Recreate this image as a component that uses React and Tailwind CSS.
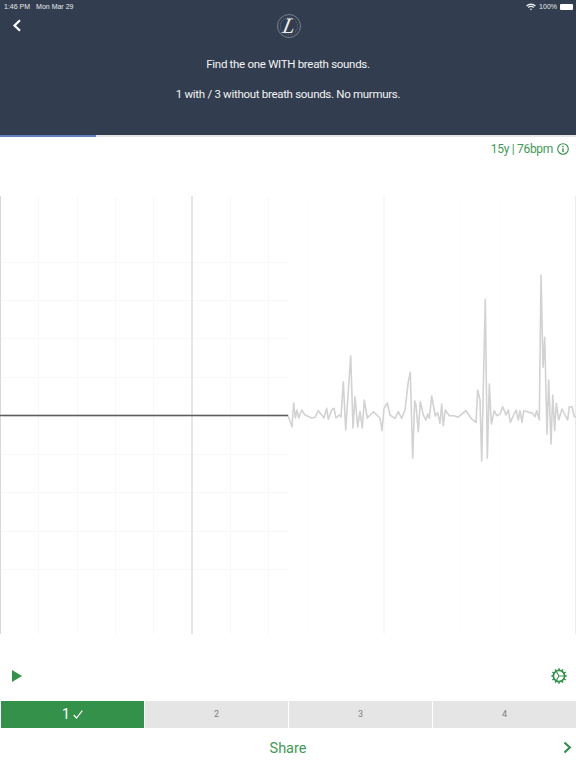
import React from "react";

const wave = "0,415.5 288,415.5 292,426.7 293.7,403 295.3,418 297,410 298.7,418 301.7,410 305,415 311.7,418 315,417.3 318.3,410.7 321.7,415 324,418 326.7,408.3 328.3,419.3 331.7,410 334,408.3 336,418 339.3,415 341,417 343.3,381.7 345.7,430 350.7,355.7 353,428 355,396.7 357.7,427 360,411.7 362.3,428 364.3,400 367.3,418 373.3,411.7 380,418 382,430.7 384,408.3 387.3,403 390,415 395,418.3 398.3,411.7 401.7,418.3 405,410 408.3,381.7 410.3,372.3 412.7,458.3 414.7,400.7 416,405 418.3,431.7 420.3,401.7 423.3,415 426,420 427.7,414 429.3,418.3 431.7,396 435.3,416 437.7,412.7 440,423.3 441.7,404 443.3,425.7 445.3,410 449.3,415.7 454.3,415.7 457.7,417.3 466,410.7 471,418.3 476,422.3 477.7,390 480,400 481.7,461 485.3,299.3 487.3,458.3 489.3,384 491.3,424 494.3,410.7 496.7,415.7 500,414 502.7,406.7 506,415 508.3,410 510.3,422.3 516,410 518.3,420 520,410.7 522,422.3 523.7,410.7 532.7,413.3 535,416.7 536.7,410.7 539.3,420 541,275 543,367.3 544.7,337.3 547,434 548.7,380 551,444 552.7,395 554.7,430.7 556.3,403.3 558.7,420 562,409 567.7,420 569.3,406.7 572,406.7 574.3,416.7 576,416.7";

const vLight = [38.5, 77.5, 115.5, 153.5, 230.5, 268.5];
const vFaint = [307.5, 345.5, 422.5, 460.5, 499.5, 537.5];
const hLight = [262, 300, 338, 377, 454, 492, 531, 569];

function Chart() {
  return (
    <svg className="block w-[576px] h-[438px]" viewBox="0 196 576 438" fill="none">
      {vLight.map((x) => (
        <line key={x} x1={x} x2={x} y1="196" y2="634" stroke="#f8f8f8" strokeWidth="1" />
      ))}
      {vFaint.map((x) => (
        <line key={x} x1={x} x2={x} y1="196" y2="634" stroke="#fdfdfd" strokeWidth="1" />
      ))}
      {hLight.map((y) => (
        <line key={y} x1="0" x2="288" y1={y + 0.5} y2={y + 0.5} stroke="#f8f8f8" strokeWidth="1" />
      ))}
      <line x1="0.5" x2="0.5" y1="196" y2="634" stroke="#d8d8d8" strokeWidth="1" />
      <line x1="192" x2="192" y1="196" y2="634" stroke="#dcdcdc" strokeWidth="1.5" />
      <line x1="384" x2="384" y1="196" y2="634" stroke="#f2f2f2" strokeWidth="1" />
      <line x1="575.5" x2="575.5" y1="196" y2="634" stroke="#ececec" strokeWidth="1" />
      <polyline points={wave} stroke="#d2d2d2" strokeWidth="1.6" strokeLinejoin="round" />
      <line x1="0" x2="288" y1="415.5" y2="415.5" stroke="#5c5c5c" strokeWidth="1.5" />
    </svg>
  );
}

function Gear() {
  const teeth = Array.from({ length: 12 }, (_, i) => i * 30);
  return (
    <svg width="16" height="16" viewBox="0 0 16 16" fill="none" stroke="#34914a">
      <circle cx="8" cy="8" r="5.6" strokeWidth="1.7" />
      {teeth.map((a) => (
        <line key={a} x1="8" y1="0.3" x2="8" y2="2.4" strokeWidth="1.5" transform={`rotate(${a} 8 8)`} />
      ))}
      <path d="M8 8 L13 8 M8 8 L5.5 3.7 M8 8 L5.5 12.3" strokeWidth="1.1" />
    </svg>
  );
}

export default function App() {
  return (
    <div className="w-[576px] h-[768px] overflow-hidden bg-white flex flex-col font-['Roboto',sans-serif]">
      <header className="h-[135px] bg-[#323e4f] flex flex-col shrink-0">
        <div className="h-[11px] flex items-center justify-between pl-1 pr-[3px] mt-[1px] font-['Liberation_Sans',sans-serif] text-[7px] leading-none text-[#e8eaec]">
          <div className="flex gap-[6px]">
            <span>1:46 PM</span>
            <span>Mon Mar 29</span>
          </div>
          <div className="flex items-center gap-[3px]">
            <svg width="10" height="8" viewBox="0 0 18 14" fill="none" stroke="#e8eaec" strokeWidth="2.4">
              <path d="M1 5 C5.5 1 12.5 1 17 5" />
              <path d="M4 8 C6.8 5.6 11.2 5.6 14 8" />
              <path d="M9 13 L6.8 10.6 C8 9.7 10 9.7 11.2 10.6 Z" fill="#e8eaec" stroke="none" />
            </svg>
            <span>100%</span>
            <span className="w-[13px] h-[6px] rounded-[1px] bg-white" />
          </div>
        </div>
        <div className="relative h-[24px] mt-[2px] flex items-center justify-center">
          <svg className="absolute left-[12px] top-[5px]" width="10" height="13" viewBox="0 0 10 13" fill="none" stroke="white" strokeWidth="2.2">
            <path d="M8 1.2 L2.5 6.5 L8 11.8" />
          </svg>
          <div className="relative ml-[2px] w-[24px] h-[24px] rounded-full border border-[#77818e] flex items-center justify-center">
            <div className="absolute inset-[2px] rounded-full border border-dotted border-[#6b7582]" />
            <span className="relative font-['Liberation_Serif',serif] italic text-[22px] leading-none text-[#eceef0] -skew-x-12">L</span>
          </div>
        </div>
        <p className="mt-[18px] text-center text-[11.5px] tracking-[-0.3px] leading-[16px] text-[#f2f3f4]">Find the one WITH breath sounds.</p>
        <p className="mt-[14px] text-center text-[11.5px] tracking-[-0.3px] leading-[16px] text-[#f2f3f4]">1 with / 3 without breath sounds. No murmurs.</p>
      </header>

      <div className="h-[2px] bg-[#e4e4e4] shrink-0">
        <div className="w-[96px] h-full bg-[#5f80bd]" />
      </div>

      <div className="h-[24px] pr-[7px] flex items-center justify-end gap-[4px] text-[#3f9a55] shrink-0">
        <span className="text-[12px] tracking-[-0.3px] leading-none">15y | 76bpm</span>
        <svg width="12" height="12" viewBox="0 0 12 12" fill="none" stroke="#34914a">
          <circle cx="6" cy="6" r="5.3" strokeWidth="1.1" />
          <path d="M6 5.2 V9" strokeWidth="1.4" />
          <path d="M6 3 V4.2" strokeWidth="1.4" />
        </svg>
      </div>

      <div className="mt-[35px] shrink-0">
        <Chart />
      </div>

      <div className="h-[66px] pl-[12px] pr-[9px] flex items-center justify-between shrink-0 pt-[18px]">
        <svg width="10" height="12" viewBox="0 0 10 12">
          <path d="M0 0 L10 6 L0 12 Z" fill="#34914a" />
        </svg>
        <Gear />
      </div>

      <div className="h-[29px] pl-[1px] grid grid-cols-4 gap-[1px] shrink-0 py-[1px]">
        <div className="bg-[#34914a] flex items-center justify-center gap-[3px] text-white text-[14px]">
          <span>1</span>
          <svg width="10" height="9" viewBox="0 0 10 9" fill="none" stroke="white" strokeWidth="1.2">
            <path d="M0.7 5 L3.5 8 L9.3 0.7" />
          </svg>
        </div>
        <div className="bg-[#e5e5e5] flex items-center justify-center text-[#808080] text-[9px]">2</div>
        <div className="bg-[#e5e5e5] flex items-center justify-center text-[#808080] text-[9px]">3</div>
        <div className="bg-[#e5e5e5] flex items-center justify-center text-[#808080] text-[9px]">4</div>
      </div>

      <div className="relative flex-1 flex items-center justify-center text-[#3f9a55] text-[14.5px]">
        <span>Share</span>
        <svg className="absolute right-[4px] top-[12px]" width="9" height="13" viewBox="0 0 9 13" fill="none" stroke="#34914a" strokeWidth="2.2">
          <path d="M1.5 1.5 L6.8 6.5 L1.5 11.5" />
        </svg>
      </div>
    </div>
  );
}
